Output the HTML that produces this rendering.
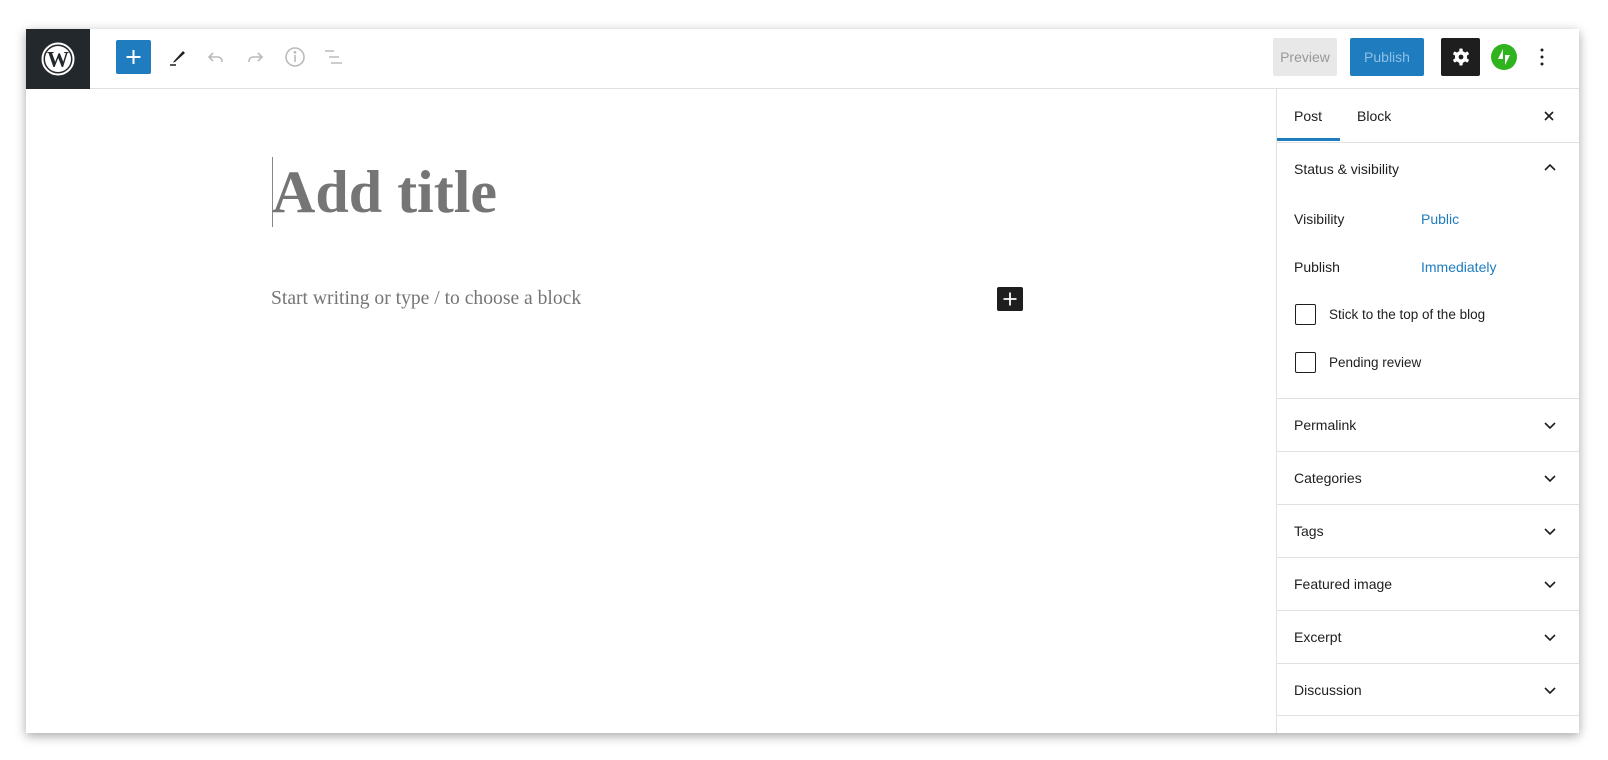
<!DOCTYPE html>
<html><head><meta charset="utf-8"><style>
*{margin:0;padding:0;box-sizing:border-box}
body{width:1608px;height:760px;background:#fff;position:relative;overflow:hidden;font-family:"Liberation Sans",sans-serif;color:#1e1e1e}
.win{position:absolute;left:26px;top:29px;width:1553px;height:704px;background:#fff;box-shadow:0 3px 10px rgba(0,0,0,.35);overflow:hidden}
.a{position:absolute}
.hdr{left:0;top:0;width:1553px;height:60px;border-bottom:1px solid #e0e0e0}
.row{position:absolute;left:1251px;width:302px;border-top:1px solid #e0e0e0}
.lbl{position:absolute;font-size:14px;white-space:nowrap}
.chev{position:absolute;left:1516px}
.cb{position:absolute;left:1269px;width:21px;height:21px;border:1.5px solid #1e1e1e;border-radius:2px}
</style></head><body>
<div class="win">
<div class="a hdr"></div>
<div class="a" style="left:0;top:0;width:64px;height:60px;background:#23282d"></div>
<svg class="a" style="left:14px;top:12px" width="36" height="36" viewBox="0 0 36 36"><circle cx="18" cy="18" r="15.5" fill="none" stroke="#fff" stroke-width="2"/><circle cx="18" cy="18" r="13" fill="#fff"/><text x="18" y="25.5" text-anchor="middle" font-family="Liberation Serif" font-weight="bold" font-size="22" fill="#23282d">W</text></svg>
<div class="a" style="left:90px;top:11px;width:35px;height:34px;background:#1e7cbf;border-radius:2px"></div>
<svg class="a" style="left:90px;top:11px" width="35" height="34"><path d="M17.5 10v14M10.5 17h14" stroke="#fff" stroke-width="2"/></svg>
<svg class="a" style="left:140px;top:16px" width="24" height="24" viewBox="0 0 24 24"><path d="M8 16l9-10 2 2-10 9-2 .5z" fill="#1e1e1e"/><path d="M4 20h6" stroke="#1e1e1e" stroke-width="1.5"/></svg>
<svg class="a" style="left:178px;top:16px" width="24" height="24" viewBox="0 0 24 24" fill="none" stroke="#bbb" stroke-width="1.6"><path d="M9 8l-4 4 4 4M5 12h9a4 4 0 0 1 4 4v1"/></svg>
<svg class="a" style="left:217px;top:16px" width="24" height="24" viewBox="0 0 24 24" fill="none" stroke="#bbb" stroke-width="1.6"><path d="M15 8l4 4-4 4M19 12h-9a4 4 0 0 0-4 4v1"/></svg>
<svg class="a" style="left:257px;top:16px" width="24" height="24" viewBox="0 0 24 24" fill="none" stroke="#bbb" stroke-width="1.6"><circle cx="12" cy="12" r="9"/><path d="M12 10v7"/><circle cx="12" cy="7.3" r=".6" fill="#bbb"/></svg>
<svg class="a" style="left:296px;top:16px" width="24" height="24" viewBox="0 0 24 24" fill="none" stroke="#bbb" stroke-width="1.6"><path d="M3 6h9M7 12h10M9 18h11"/></svg>
<div class="a" style="left:1247px;top:9px;width:64px;height:38px;background:#e8e8e8;border-radius:2px;color:#999;font-size:14px;line-height:38px;text-align:center">Preview</div>
<div class="a" style="left:1324px;top:9px;width:74px;height:38px;background:#1e7cbf;border-radius:2px;color:#8fc0e6;font-size:14px;line-height:38px;text-align:center">Publish</div>
<div class="a" style="left:1415px;top:9px;width:39px;height:38px;background:#1e1e1e;border-radius:2px"></div>
<svg class="a" style="left:1423px;top:16px" width="24" height="24" viewBox="0 0 24 24"><g fill="#fff"><circle cx="12" cy="12" r="6"/><rect x="10.3" y="3.5" width="3.4" height="17" rx="1"/><rect x="10.3" y="3.5" width="3.4" height="17" rx="1" transform="rotate(60 12 12)"/><rect x="10.3" y="3.5" width="3.4" height="17" rx="1" transform="rotate(120 12 12)"/></g><circle cx="12" cy="12" r="2.4" fill="#1e1e1e"/></svg>
<svg class="a" style="left:1465px;top:15px" width="26" height="26" viewBox="0 0 26 26"><circle cx="13" cy="13" r="13" fill="#2fb41f"/><path d="M12 5v10H7zM14 21V11h5z" fill="#fff"/></svg>
<svg class="a" style="left:1510px;top:16px" width="12" height="24"><circle cx="6" cy="5" r="1.5" fill="#1e1e1e"/><circle cx="6" cy="12" r="1.5" fill="#1e1e1e"/><circle cx="6" cy="19" r="1.5" fill="#1e1e1e"/></svg>

<div class="a" style="left:246px;top:128px;width:1px;height:70px;background:#888"></div>
<div class="a" style="left:246px;top:123px;font-family:'Liberation Serif',serif;font-weight:bold;font-size:60px;color:#757575;line-height:80px;white-space:nowrap">Add title</div>
<div class="a" style="left:245px;top:255px;font-family:'Liberation Serif',serif;font-size:19.6px;color:#757575;line-height:30px;white-space:nowrap">Start writing or type / to choose a block</div>
<div class="a" style="left:971px;top:258px;width:26px;height:24px;background:#1e1e1e;border-radius:2px"></div>
<svg class="a" style="left:971px;top:258px" width="26" height="24"><path d="M13 5.5v13M6.5 12h13" stroke="#fff" stroke-width="1.8"/></svg>

<div class="a" style="left:1250px;top:60px;width:1px;height:650px;background:#e0e0e0"></div>
<div class="lbl" style="left:1268px;top:79px">Post</div>
<div class="lbl" style="left:1331px;top:79px">Block</div>
<div class="a" style="left:1251px;top:109px;width:63px;height:3px;background:#1e7cbf"></div>
<svg class="a" style="left:1515px;top:79px" width="16" height="16"><path d="M4 4l8 8M12 4L4 12" stroke="#1e1e1e" stroke-width="1.6"/></svg>
<div class="row" style="top:113px"></div>
<div class="lbl" style="left:1268px;top:132px">Status &amp; visibility</div>
<svg class="chev" style="top:131px" width="16" height="16"><path d="M3 10l5-5 5 5" fill="none" stroke="#1e1e1e" stroke-width="1.6"/></svg>
<div class="lbl" style="left:1268px;top:182px">Visibility</div>
<div class="lbl" style="left:1395px;top:182px;color:#1e7cbf">Public</div>
<div class="lbl" style="left:1268px;top:230px">Publish</div>
<div class="lbl" style="left:1395px;top:230px;color:#1e7cbf">Immediately</div>
<div class="cb" style="top:275px"></div>
<div class="lbl" style="left:1303px;top:278px;font-size:13.5px">Stick to the top of the blog</div>
<div class="cb" style="top:323px"></div>
<div class="lbl" style="left:1303px;top:326px;font-size:13.5px">Pending review</div>
<div class="row" style="top:369px"></div>
<div class="lbl" style="left:1268px;top:388px">Permalink</div>
<div class="row" style="top:422px"></div>
<div class="lbl" style="left:1268px;top:441px">Categories</div>
<div class="row" style="top:475px"></div>
<div class="lbl" style="left:1268px;top:494px">Tags</div>
<div class="row" style="top:528px"></div>
<div class="lbl" style="left:1268px;top:547px">Featured image</div>
<div class="row" style="top:581px"></div>
<div class="lbl" style="left:1268px;top:600px">Excerpt</div>
<div class="row" style="top:634px"></div>
<div class="lbl" style="left:1268px;top:653px">Discussion</div>
<div class="row" style="top:686px"></div>
<svg class="chev" style="top:388px" width="16" height="16"><path d="M3 6l5 5 5-5" fill="none" stroke="#1e1e1e" stroke-width="1.6"/></svg>
<svg class="chev" style="top:441px" width="16" height="16"><path d="M3 6l5 5 5-5" fill="none" stroke="#1e1e1e" stroke-width="1.6"/></svg>
<svg class="chev" style="top:494px" width="16" height="16"><path d="M3 6l5 5 5-5" fill="none" stroke="#1e1e1e" stroke-width="1.6"/></svg>
<svg class="chev" style="top:547px" width="16" height="16"><path d="M3 6l5 5 5-5" fill="none" stroke="#1e1e1e" stroke-width="1.6"/></svg>
<svg class="chev" style="top:600px" width="16" height="16"><path d="M3 6l5 5 5-5" fill="none" stroke="#1e1e1e" stroke-width="1.6"/></svg>
<svg class="chev" style="top:653px" width="16" height="16"><path d="M3 6l5 5 5-5" fill="none" stroke="#1e1e1e" stroke-width="1.6"/></svg>
</div>
</body></html>
